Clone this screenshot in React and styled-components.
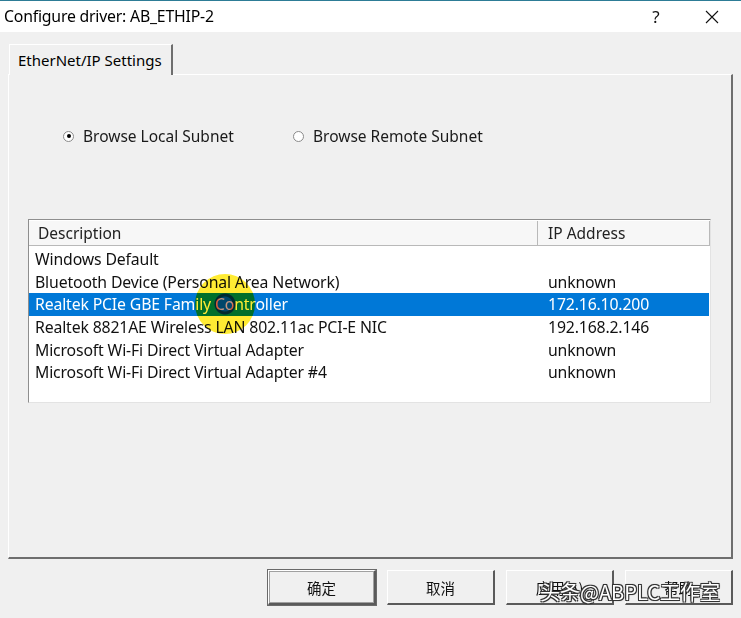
import React, { useState } from 'react';
import styled, { createGlobalStyle } from 'styled-components';

const GlobalStyle = createGlobalStyle`
  html, body {
    margin: 0;
    padding: 0;
    background: #f0f0f0;
  }
  body {
    font-family: "Noto Sans", "Noto Sans CJK SC", sans-serif;
    color: #000;
  }
`;

const Window = styled.div`
  width: 741px;
  height: 618px;
  display: flex;
  flex-direction: column;
  background: #f0f0f0;
  position: relative;
  overflow: hidden;
`;

const TitleBar = styled.div`
  height: 32px;
  background: #fff;
  border-top: 1px solid #2d7c96;
  display: flex;
  align-items: center;
  padding-left: 4px;
  box-sizing: border-box;
`;

const Title = styled.div`
  flex: 1;
  font-size: 15.8px;
  letter-spacing: -0.2px;
  color: #000;
  padding-bottom: 1px;
`;

const TitleButton = styled.div`
  width: ${(p) => p.$w}px;
  text-align: center;
  font-size: 17px;
  color: #111;
  display: flex;
  justify-content: center;
`;

const Body = styled.div`
  flex: 1;
  display: flex;
  flex-direction: column;
  padding: 12px 8px 0 8px;
`;

const TabStrip = styled.div`
  display: flex;
  height: 30px;
  padding-left: 1px;
`;

const Tab = styled.div`
  width: 164px;
  box-sizing: border-box;
  border-top: 1px solid #fff;
  border-left: 1px solid #fff;
  border-right: 2px solid #6e6e6e;
  display: flex;
  align-items: center;
  padding-left: 8px;
  font-size: 15px;
  margin-bottom: -1px;
  background: #f0f0f0;
  position: relative;
  z-index: 1;
`;

const Panel = styled.div`
  height: 485px;
  box-sizing: border-box;
  border-top: 1px solid #fff;
  border-left: 1px solid #fff;
  border-right: 2px solid #6e6e6e;
  border-bottom: 2px solid #6e6e6e;
  display: flex;
  flex-direction: column;
  padding: 51px 20px 0 19px;
`;

const RadioRow = styled.div`
  display: flex;
  align-items: center;
  height: 20px;
  padding-left: 35px;
`;

const RadioLabel = styled.label`
  display: flex;
  align-items: center;
  gap: 9px;
  font-size: 15.5px;
  color: #1a1a1a;
  width: ${(p) => p.$w}px;
  cursor: default;
`;

const RadioDot = styled.span`
  width: 11px;
  height: 11px;
  box-sizing: border-box;
  border-radius: 50%;
  border: 1px solid #8a8a8a;
  background: #fff;
  display: flex;
  align-items: center;
  justify-content: center;
  &::after {
    content: '';
    width: 4px;
    height: 4px;
    border-radius: 50%;
    background: ${(p) => (p.$on ? '#000' : 'transparent')};
  }
`;

const List = styled.div`
  margin-top: 73px;
  height: 184px;
  box-sizing: border-box;
  border-top: 1px solid #8e8e8e;
  border-left: 1px solid #8e8e8e;
  border-right: 1px solid #e3e3e3;
  border-bottom: 1px solid #e3e3e3;
  background: #fff;
  display: flex;
  flex-direction: column;
`;

const Header = styled.div`
  display: grid;
  grid-template-columns: 509px 172px;
  height: 25px;
  margin-top: 1px;
`;

const HeaderCell = styled.div`
  box-sizing: border-box;
  border-right: 1px solid #b9b9b9;
  border-bottom: 1px solid #b9b9b9;
  display: flex;
  align-items: center;
  padding-left: ${(p) => p.$pad}px;
  font-size: 15.5px;
  color: #222;
  background: #f7f7f7;
`;

const Rows = styled.div`
  padding-top: 2px;
  display: flex;
  flex-direction: column;
`;

const Row = styled.div`
  display: grid;
  grid-template-columns: 512px 1fr;
  height: 22.6px;
  align-items: center;
  font-size: 15.8px;
  background: ${(p) => (p.$sel ? '#0078d7' : 'transparent')};
  color: ${(p) => (p.$sel ? '#fff' : '#111')};
  margin-right: 1px;
`;

const Cell = styled.div`
  padding-left: ${(p) => p.$pad}px;
  white-space: nowrap;
  letter-spacing: -0.15px;
`;

const ButtonBar = styled.div`
  display: flex;
  justify-content: flex-end;
  gap: 11px;
  padding: 11px 0 0 0;
`;

const Button = styled.button`
  width: 108px;
  height: 35px;
  box-sizing: border-box;
  background: #f0f0f0;
  border-top: 1px solid #fff;
  border-left: 1px solid #fff;
  border-right: 2px solid #5a5a5a;
  border-bottom: 2px solid #5a5a5a;
  box-shadow: ${(p) => (p.$default ? 'inset 0 0 0 1px #a0a0a0, 0 0 0 1px #6a6a6a' : 'none')};
  font-family: "Noto Sans CJK SC", sans-serif;
  font-size: 14.5px;
  color: #111;
  padding: 0;
`;

const Watermark = styled.div`
  position: absolute;
  left: 540px;
  top: 577px;
  font-family: "Noto Sans CJK SC", sans-serif;
  font-size: 20px;
  color: #fff;
  letter-spacing: 0;
  text-shadow: -1px -1px 0 #333, 1px -1px 0 #333, -1px 1px 0 #333, 1px 1px 0 #333,
    0 0 2px #000;
  pointer-events: none;
`;

const CursorHalo = styled.div`
  position: absolute;
  left: 195px;
  top: 274px;
  width: 60px;
  height: 60px;
  border-radius: 50%;
  background: radial-gradient(
    circle,
    rgba(150, 60, 20, 0.55) 0 7px,
    rgba(210, 60, 20, 0.85) 8px 10px,
    rgba(255, 230, 0, 0.8) 11px 100%
  );
  mix-blend-mode: multiply;
  pointer-events: none;
`;

const adapters = [
  { name: 'Windows Default', ip: '' },
  { name: 'Bluetooth Device (Personal Area Network)', ip: 'unknown' },
  { name: 'Realtek PCIe GBE Family Controller', ip: '172.16.10.200' },
  { name: 'Realtek 8821AE Wireless LAN 802.11ac PCI-E NIC', ip: '192.168.2.146' },
  { name: 'Microsoft Wi-Fi Direct Virtual Adapter', ip: 'unknown' },
  { name: 'Microsoft Wi-Fi Direct Virtual Adapter #4', ip: 'unknown' },
];

export default function App() {
  const [mode, setMode] = useState('local');
  const [selected, setSelected] = useState(2);

  return (
    <Window>
      <GlobalStyle />
      <TitleBar>
        <Title>Configure driver: AB_ETHIP-2</Title>
        <TitleButton $w={30}>?</TitleButton>
        <TitleButton $w={30} style={{ marginRight: 14, marginLeft: 26 }}>
          <svg width="14" height="14" viewBox="0 0 14 14">
            <path d="M1 1 L13 13 M13 1 L1 13" stroke="#111" strokeWidth="1.1" />
          </svg>
        </TitleButton>
      </TitleBar>
      <Body>
        <TabStrip>
          <Tab>EtherNet/IP Settings</Tab>
        </TabStrip>
        <Panel>
          <RadioRow>
            <RadioLabel $w={230} onClick={() => setMode('local')}>
              <RadioDot $on={mode === 'local'} />
              Browse Local Subnet
            </RadioLabel>
            <RadioLabel $w={220} onClick={() => setMode('remote')}>
              <RadioDot $on={mode === 'remote'} />
              Browse Remote Subnet
            </RadioLabel>
          </RadioRow>
          <List>
            <Header>
              <HeaderCell $pad={9}>Description</HeaderCell>
              <HeaderCell $pad={10}>IP Address</HeaderCell>
            </Header>
            <Rows>
              {adapters.map((a, i) => (
                <Row key={a.name} $sel={i === selected} onClick={() => setSelected(i)}>
                  <Cell $pad={6}>{a.name}</Cell>
                  <Cell $pad={7}>{a.ip}</Cell>
                </Row>
              ))}
            </Rows>
          </List>
        </Panel>
        <ButtonBar>
          <Button $default>确定</Button>
          <Button>取消</Button>
          <Button>应用(A)</Button>
          <Button>帮助</Button>
        </ButtonBar>
      </Body>
      <CursorHalo />
      <Watermark>头条@ABPLC工作室</Watermark>
    </Window>
  );
}
